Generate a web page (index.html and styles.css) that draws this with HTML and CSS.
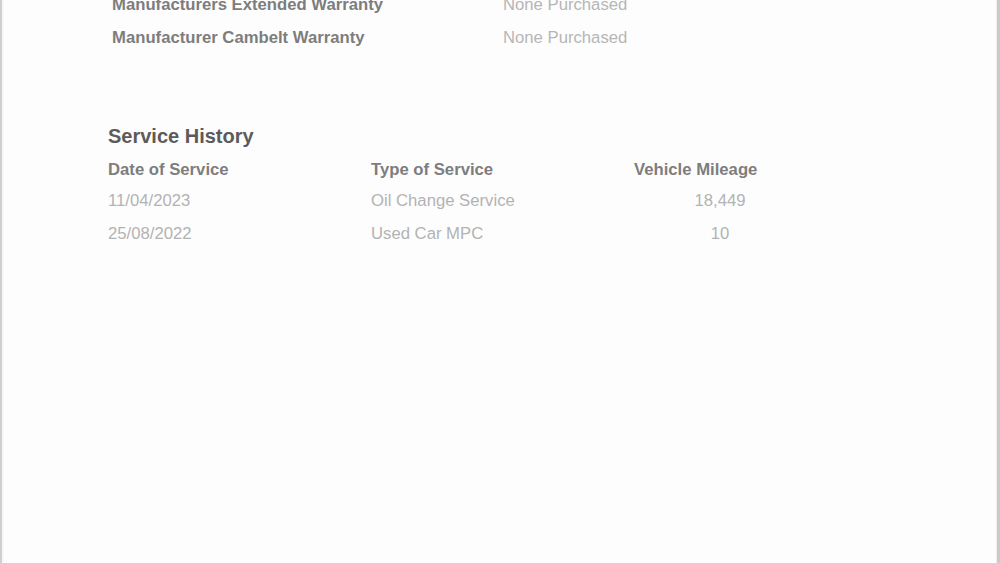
FILE: index.html
```html
<!DOCTYPE html>
<html>
<head>
<meta charset="utf-8">
<link rel="stylesheet" href="styles.css">
</head>
<body>
<div class="page">
  <div class="warranty">
    <div class="w-row"><span class="w-label">Manufacturers Extended Warranty</span><span class="w-value">None Purchased</span></div>
    <div class="w-row"><span class="w-label">Manufacturer Cambelt Warranty</span><span class="w-value">None Purchased</span></div>
  </div>
  <section class="history">
    <h2 class="history-title">Service History</h2>
    <div class="h-row h-head">
      <span class="c-date">Date of Service</span>
      <span class="c-type">Type of Service</span>
      <span class="c-miles">Vehicle Mileage</span>
    </div>
    <div class="h-row h-data">
      <span class="c-date">11/04/2023</span>
      <span class="c-type">Oil Change Service</span>
      <span class="c-miles"><span class="miles-val">18,449</span></span>
    </div>
    <div class="h-row h-data">
      <span class="c-date">25/08/2022</span>
      <span class="c-type">Used Car MPC</span>
      <span class="c-miles"><span class="miles-val">10</span></span>
    </div>
  </section>
</div>
</body>
</html>
```
FILE: styles.css
```css
html, body {
  margin: 0;
  padding: 0;
  background: #fdfdfd;
}
body {
  font-family: "Liberation Sans", Arial, Helvetica, sans-serif;
  font-size: 16.7px;
  overflow: hidden;
}
.page {
  box-sizing: border-box;
  width: 1000px;
  height: 563px;
  border-left: 2px solid #cfcfcf;
  border-right: 3px solid #cacaca;
  background: #fdfdfd;
  overflow: hidden;
  box-shadow: inset 2px 0 0 #f7f7f7, inset -1px 0 0 #f0f0f0;
}
.warranty {
  margin-top: -12px;
  padding-left: 110px;
}
.w-row {
  display: flex;
  line-height: 33px;
}
.w-label {
  width: 391px;
  font-weight: bold;
  color: #7d7d7d;
}
.w-value {
  color: #b6b6b6;
}
.history {
  margin-top: 66px;
  padding-left: 106px;
}
.history-title {
  margin: 0 0 3px;
  font-size: 20px;
  font-weight: bold;
  line-height: 32px;
  color: #5b5b5b;
}
.h-row {
  display: flex;
  line-height: 32.5px;
}
.h-head {
  line-height: 30px;
  font-weight: bold;
  color: #7d7d7d;
}
.h-data {
  color: #b3b3b3;
}
.c-date, .c-type {
  width: 263px;
}
.c-miles {
  width: 172px;
}
.h-data .c-miles {
  text-align: center;
}
```
